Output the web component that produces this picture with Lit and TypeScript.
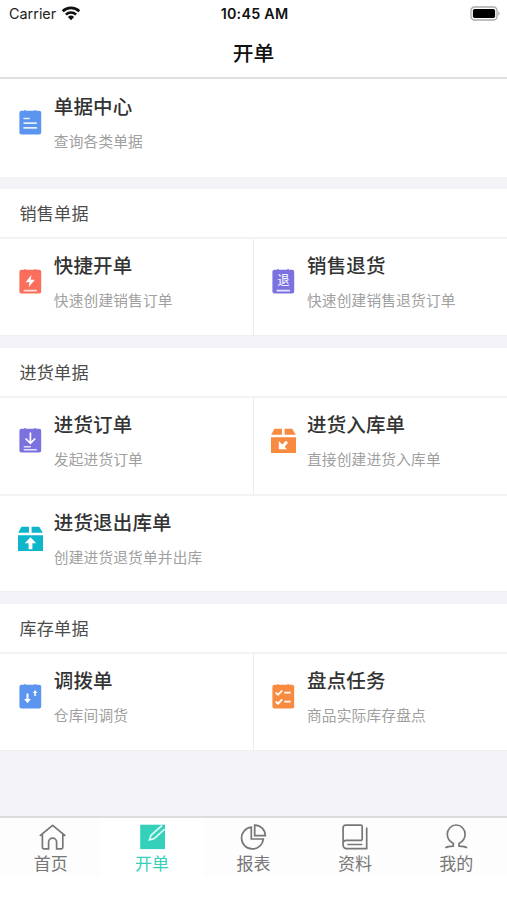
import { LitElement, html, css, svg, nothing } from "lit";
import { customElement, property } from "lit/decorators.js";

const note = (color: string, inner: unknown) => svg`
  <path fill=${color} d="M5.4 1.8H8V1.2h2v.6h8v-.6h2v.6h3.2a2 2 0 0 1 2 2v19.8a2 2 0 0 1-2 2H5.4a2 2 0 0 1-2-2V3.8a2 2 0 0 1 2-2z"/>${inner}`;

const carton = (color: string, inner: unknown) => svg`
  <path fill=${color} d="M5.4 1.7h7.6v6.1H2.2zM15.6 1.7h7.6l3.6 6.1H15.6zM2 10.2h25v15.9H2z"/>${inner}`;

const icons: Record<string, unknown> = {
  doc: note("#5b95f0", svg`<path stroke="#e4eefd" stroke-width="1.6" stroke-linecap="round" d="M8 9.5h5.2M8 14.1h12.4M8 18.9h12.4"/>`),
  flash: note("#fb6e5b", svg`<path fill="#fff" d="M15.6 6.8 9.6 14.3h4l-1 5 6.300-7.600h-4.200z"/><path stroke="#ffe0db" stroke-width="1.7" stroke-linecap="round" d="M8.3 22.6h12"/>`),
  refund: note("#7b72e0", svg`<text x="14.4" y="17.4" text-anchor="middle" font-size="12" font-weight="500" fill="#eeecff">退</text><path stroke="#e6e3ff" stroke-width="1.7" stroke-linecap="round" d="M8.3 22.6h12"/>`),
  order: note("#7b72e0", svg`<path fill="none" stroke="#fff" stroke-width="1.7" d="M14.4 5.6v10.6M9.6 11.5l4.8 4.8 4.8-4.8"/><path stroke="#e6e3ff" stroke-width="1.5" stroke-linecap="round" d="M8.3 19.7h6M8.3 22.8h12"/>`),
  inbound: carton("#f98b40", svg`<path fill="#fff" d="M9.8 14v8.3h8.3l-2.5-2.5 3.5-4-2.2-2-3.7 3.6z"/>`),
  outbound: carton("#0db6ca", svg`<path fill="#fff" d="m14.5 12.2 5.8 6h-3.900v6h-3.800v-6H8.700z"/>`),
  transfer: note("#5b95f0", svg`<path fill="#fff" d="M10.5 10.6h2v5.4h2.4L11.5 20.2 8.1 16h2.4zM19.1 7l2.3 2.9h-1.5v3.2h-1.6V9.9h-1.5z"/>`),
  check: note("#f98b40", svg`<path fill="none" stroke="#fff" stroke-width="1.8" d="m6.7 9.6 2.3 2.2 4.1-4.2M6.7 18.5 9 20.7l4.1-4.2M15.3 9.7h6.3M15.3 18.6h6.3"/>`),
  home: svg`<path d="M3.8 12.8 16.6 2.3l12.8 10.5M6.4 11v13.3a1.5 1.5 0 0 0 1.5 1.5h4.7v-6.600a4 4 0 0 1 8 0v6.600h4.700a1.500 1.500 0 0 0 1.500-1.500V11"/>`,
  edit: svg`<path fill="#34d0ba" stroke="none" d="M2.2 1.7h24.8v24.4H2.200z"/><path stroke="#d5fbf4" stroke-width="1.7" d="M24 2.5 13 12.300l-1.500 4.500 4.600-1.100L26.700 6.200"/>`,
  chart: svg`<path d="M12.3 4.2A10.9 10.9 0 1 0 24.3 16H12.3z"/><path d="M15.7 2.1v10.6h10.6A10.6 10.6 0 0 0 15.7 2.1z"/>`,
  book: svg`<path d="M22.2 17.3V3.4a1.3 1.3 0 0 0-1.3-1.3H5.5a2.4 2.4 0 0 0-2.4 2.4v17.8a3.3 3.3 0 0 0 3.3 3.3h20.3V4.5M3.1 20.3a3 3 0 0 1 3-3h16.1M7.3 21.5h15"/>`,
  user: svg`<path d="M3.4 24.9c1.8-1.3 4.2-1.6 7.9-1.7v-2.800C7.700 18.600 5.300 15.500 5.300 11.300a8.900 9.300 0 0 1 17.800 0c0 4.200-2.400 7.300-6 9.100v2.800c3.700.1 6.100.4 7.900 1.700"/>`,
};

interface Entry { icon: string; name: string; hint: string }
interface Group { title?: string; rows: Entry[][] }

const groups: Group[] = [
  { rows: [[{ icon: "doc", name: "单据中心", hint: "查询各类单据" }]] },
  {
    title: "销售单据",
    rows: [[
      { icon: "flash", name: "快捷开单", hint: "快速创建销售订单" },
      { icon: "refund", name: "销售退货", hint: "快速创建销售退货订单" },
    ]],
  },
  {
    title: "进货单据",
    rows: [
      [
        { icon: "order", name: "进货订单", hint: "发起进货订单" },
        { icon: "inbound", name: "进货入库单", hint: "直接创建进货入库单" },
      ],
      [{ icon: "outbound", name: "进货退出库单", hint: "创建进货退货单并出库" }],
    ],
  },
  {
    title: "库存单据",
    rows: [[
      { icon: "transfer", name: "调拨单", hint: "仓库间调货" },
      { icon: "check", name: "盘点任务", hint: "商品实际库存盘点" },
    ]],
  },
];

const tabs = [
  { icon: "home", label: "首页" },
  { icon: "edit", label: "开单", active: true },
  { icon: "chart", label: "报表" },
  { icon: "book", label: "资料" },
  { icon: "user", label: "我的" },
];

@customElement("menu-entry")
class MenuEntry extends LitElement {
  @property({ attribute: false }) entry!: Entry;

  static styles = css`
    :host { flex: 1; display: flex; align-items: flex-start; padding: 12px 0 0 15.6px; box-sizing: border-box; }
    .icon { width: 29px; height: 29px; flex: none; margin-top: 16.6px; overflow: visible; }
    .text { margin-left: 9.2px; white-space: nowrap; }
    .name { font-size: 19.5px; line-height: 28px; letter-spacing: 0.15px; font-weight: 500; color: #333; }
    .hint { margin-top: 10px; font-size: 14.7px; line-height: 22px; letter-spacing: 0.18px; color: #a0a0a0; }
  `;

  render() {
    return html`
      <svg class="icon" viewBox="0 0 29 29">${icons[this.entry.icon]}</svg>
      <div class="text">
        <div class="name">${this.entry.name}</div>
        <div class="hint">${this.entry.hint}</div>
      </div>`;
  }
}

@customElement("app-root")
class AppRoot extends LitElement {
  static styles = css`
    :host {
      display: flex; flex-direction: column; height: 900px; background: #fff; overflow: hidden;
      font-family: "Noto Sans CJK SC", sans-serif;
    }
    .status {
      display: grid; grid-template-columns: 1fr auto 1fr; align-items: center; height: 28px; padding: 0 7px 0 9px;
      font: 14.4px/28px Inter, sans-serif; color: #222;
    }
    .carrier { display: flex; align-items: center; gap: 5px; }
    .time { font-weight: 600; font-size: 14.3px; letter-spacing: 0.25px; color: #111; }
    .wifi { width: 20px; height: 16px; margin-top: -3px; }
    .battery { width: 30px; height: 15px; justify-self: end; margin-top: -2px; }
    .nav {
      height: 49px; border-bottom: 2px solid #e0e0e0; text-align: center;
      font-size: 20.8px; line-height: 48px; font-weight: 500; color: #111;
    }
    .content { flex: 1; background: #f4f4f8; }
    .group { background: #fff; margin-bottom: 12px; border-bottom: 1px solid #efeff1; }
    .group.plain { border-bottom: 0; }
    .heading { height: 48px; padding-left: 19.5px; font-size: 17.1px; line-height: 48px; letter-spacing: 0.2px; color: #4c4c4c; border-bottom: 2px solid #f3f3f5; }
    .row { display: flex; height: 96px; }
    .plain .row { height: 98px; }
    .plain menu-entry { padding-top: 13px; }
    .row + .row { border-top: 2px solid #f3f3f5; height: 95px; }
    .split { border-left: 1px solid #ececef; margin-left: -1px; padding-left: 15px; }
    .tabs { display: flex; height: 59px; border-top: 2px solid #dcdcde; background: #fdfdfd; }
    .tab { flex: 1; display: flex; flex-direction: column; align-items: center; color: #777; font-size: 17px; line-height: 24px; }
    .tab.active { color: #34d0ba; background: #fff; }
    .tab svg { width: 29px; height: 28px; margin-top: 5px; fill: none; stroke: currentColor; stroke-width: 1.7; overflow: visible; }
    .foot { height: 23px; background: #fff; }
  `;

  render() {
    return html`
      <div class="status">
        <span class="carrier">Carrier
          <svg class="wifi" viewBox="0 0 20 16" fill="none" stroke="#111" stroke-width="2.7">
            <path d="M1.7 6.3a11.9 11.9 0 0 1 16.6 0M4.9 9.6a7.3 7.3 0 0 1 10.2 0"/>
            <path fill="#111" stroke="none" d="M6.9 12a4.5 4.5 0 0 1 6.2 0L10 15.2z"/>
          </svg>
        </span>
        <span class="time">10:45 AM</span>
        <svg class="battery" viewBox="0 0 30 15">
          <rect x="1" y="1" width="26" height="13" rx="3.6" fill="#fff" stroke="#aaa" stroke-width="1.3"/>
          <rect x="2.9" y="2.9" width="22.2" height="9.2" rx="1.8" fill="#000"/>
          <path fill="#aaa" d="M28.3 5.3c1.8.8 1.8 3.6 0 4.4z"/>
        </svg>
      </div>
      <div class="nav">开单</div>
      <div class="content">
        ${groups.map((g) => html`
          <section class="group ${g.title ? "" : "plain"}">
            ${g.title ? html`<div class="heading">${g.title}</div>` : nothing}
            ${g.rows.map((r) => html`<div class="row">
              ${r.map((e, i) => html`<menu-entry class=${i ? "split" : ""} .entry=${e}></menu-entry>`)}
            </div>`)}
          </section>`)}
      </div>
      <div class="tabs">
        ${tabs.map((t) => html`<div class="tab ${t.active ? "active" : ""}">
          <svg viewBox="0 0 29 28">${icons[t.icon]}</svg><span>${t.label}</span>
        </div>`)}
      </div>
      <div class="foot"></div>`;
  }
}
